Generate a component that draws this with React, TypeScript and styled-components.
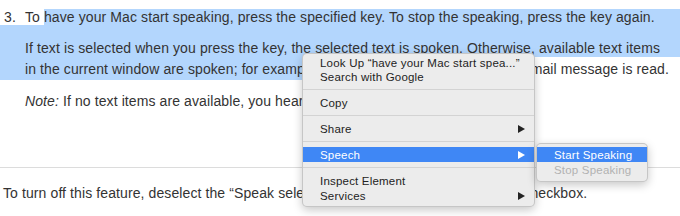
import React from "react";
import styled, { createGlobalStyle } from "styled-components";

const Global = createGlobalStyle`
  html, body { margin: 0; padding: 0; background: #ffffff; }
  body {
    width: 680px;
    height: 216px;
    overflow: hidden;
    font-family: "Liberation Sans", Arial, sans-serif;
  }
`;

const SEL = "#b3d6fd";

const Page = styled.div`
  position: relative;
  width: 680px;
  height: 216px;
  overflow: hidden;
  color: #333333;
  font-size: 14px;
  letter-spacing: 0.1px;
`;

const FirstRow = styled.div`
  margin-top: 9px;
  height: 16px;
  line-height: 16px;
  display: flex;
  white-space: nowrap;
`;

const Marker = styled.span`
  width: 21px;
  padding-left: 4px;
`;

const Plain = styled.span`
  white-space: pre;
`;

const SelFill = styled.span`
  flex: 1;
  background: ${SEL};
`;

const SelBlock = styled.div`
  background: ${SEL};
  padding-top: 11px;
`;

const TextRow = styled.div<{ $indent?: boolean; $gap?: number }>`
  box-sizing: border-box;
  height: 21px;
  padding-top: 2px;
  margin-top: ${(p) => p.$gap ?? 0}px;
  padding-left: ${(p) => (p.$indent ? 25 : 3)}px;
  line-height: 21px;
  white-space: nowrap;
  display: flex;
`;

const SelInline = styled.span`
  background: ${SEL};
  margin-left: -25px;
  padding-left: 25px;
  margin-top: -2px;
  padding-top: 2px;
  height: 21px;
  white-space: pre;
`;

const Rule = styled.hr`
  border: none;
  height: 1px;
  background: #dcdcdc;
  margin: 57px 0 13px;
`;

const Menu = styled.div`
  position: absolute;
  left: 302px;
  top: 53px;
  width: 233px;
  box-sizing: border-box;
  padding: 2px 0 3px;
  background: #ececec;
  border: 1px solid rgba(0, 0, 0, 0.16);
  border-radius: 5px;
  box-shadow: 0 3px 10px rgba(0, 0, 0, 0.22);
  font-size: 11.5px;
  letter-spacing: 0.2px;
  color: #232323;
`;

const SubMenu = styled(Menu)`
  left: calc(100% + 2px);
  top: -4px;
  width: 112px;
  padding: 3px 0 4px;
`;

const Item = styled.div<{ $active?: boolean; $disabled?: boolean; $h?: number }>`
  position: relative;
  box-sizing: border-box;
  height: ${(p) => p.$h ?? 15}px;
  padding: 0 9px 0 17px;
  display: flex;
  align-items: center;
  justify-content: space-between;
  white-space: nowrap;
  background: ${(p) => (p.$active ? "#3f87f5" : "transparent")};
  color: ${(p) => (p.$active ? "#ffffff" : p.$disabled ? "#b2b2b2" : "#232323")};
`;

const Sep = styled.div`
  height: 11px;
  display: flex;
  align-items: center;
  &::after {
    content: "";
    flex: 1;
    height: 1px;
    background: #d3d3d3;
  }
`;

const Arrow = ({ color }: { color: string }) => (
  <svg width="7" height="8" viewBox="0 0 7 8">
    <polygon points="0,0 7,4 0,8" fill={color} />
  </svg>
);

export default function App() {
  return (
    <>
      <Global />
      <Page>
        <FirstRow>
          <Marker>3.</Marker>
          <Plain>To </Plain>
          <SelFill>
            have your Mac start speaking, press the specified key. To stop the speaking, press the key again.
          </SelFill>
        </FirstRow>
        <SelBlock>
          <TextRow $indent>
            If text is selected when you press the key, the selected text is spoken. Otherwise, available text items
          </TextRow>
        </SelBlock>
        <TextRow $indent>
          <SelInline>in the current window are spoken; for example, if Mail is active</SelInline>
          <Plain>, the text of your email message is read.</Plain>
        </TextRow>
        <TextRow $indent $gap={11}>
          <Plain>
            <i>Note:</i> If no text items are available, you hear a beep.
          </Plain>
        </TextRow>
        <Rule />
        <TextRow>
          To turn off this feature, deselect the “Speak selected text when the key is pressed” checkbox.
        </TextRow>

        <Menu>
          <Item $h={14}>Look Up “have your Mac start spea...”</Item>
          <Item $h={14}>Search with Google</Item>
          <Sep />
          <Item>Copy</Item>
          <Sep />
          <Item>
            Share
            <Arrow color="#232323" />
          </Item>
          <Sep />
          <Item $active>
            Speech
            <Arrow color="#ffffff" />
            <SubMenu>
              <Item $active>Start Speaking</Item>
              <Item $disabled>Stop Speaking</Item>
            </SubMenu>
          </Item>
          <Sep />
          <Item>Inspect Element</Item>
          <Item>
            Services
            <Arrow color="#232323" />
          </Item>
        </Menu>
      </Page>
    </>
  );
}
